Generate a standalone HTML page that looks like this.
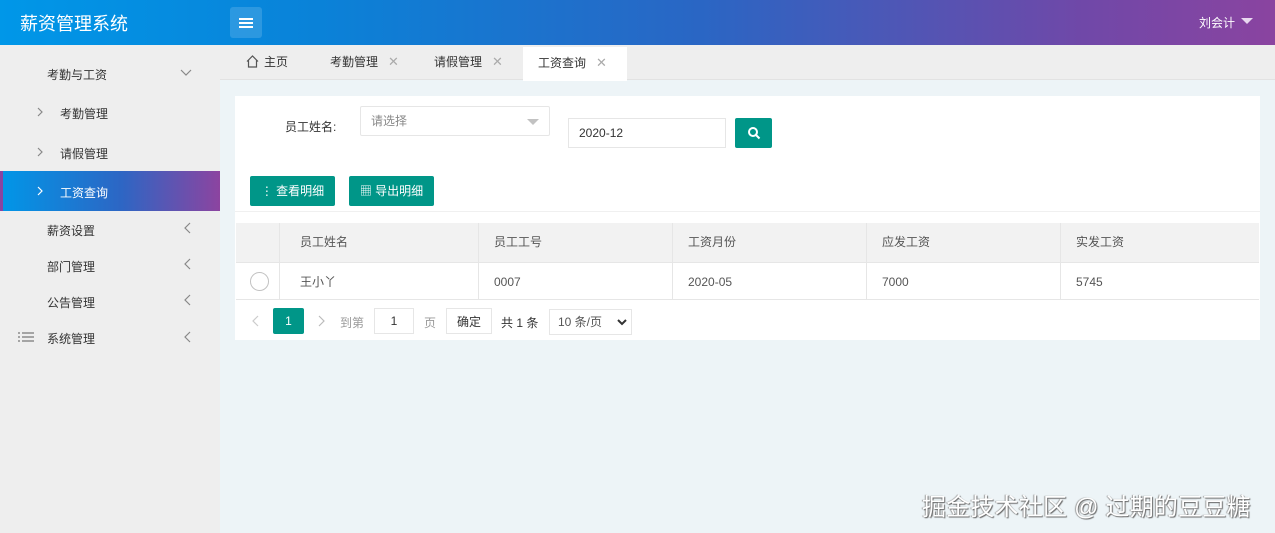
<!DOCTYPE html>
<html><head><meta charset="utf-8"><style>
*{margin:0;padding:0;box-sizing:border-box}
body{width:1275px;height:533px;overflow:hidden;position:relative;background:#edf4f7;font-family:"Liberation Sans","Noto Sans CJK SC",sans-serif;font-size:12px;color:#333}
.a{position:absolute}
.hdr{left:0;top:0;width:1275px;height:45px;background:linear-gradient(90deg,#0097e8 0%,#0a82d8 25%,#2a66c4 55%,#7048a8 85%,#8a44a0 100%)}
.side{left:0;top:45px;width:220px;height:488px;background:#eeeeee}
.tabs{left:220px;top:45px;width:1055px;height:35px;background:#eeeeee;border-bottom:1px solid #e2e2e2}
.tab{top:45px;height:35px;line-height:34px;font-size:12px;color:#333}
.x{color:#aaa;font-size:13px;margin-left:10px}
.card{left:235px;top:96px;width:1025px;height:244px;background:#fff}
.btn{background:#009688;color:#fff;border-radius:2px;height:30px;line-height:30px;font-size:12px;text-align:center}
.th{top:223px;height:39px;background:#f2f2f2;border-right:1px solid #e6e6e6;line-height:38px;padding-left:20px;color:#555}
.td{top:262px;height:38px;border-right:1px solid #e6e6e6;line-height:38px;padding-left:20px;color:#555;border-top:1px solid #e6e6e6;border-bottom:1px solid #e6e6e6}
.mi{color:#333;font-size:12px}
svg.c{position:absolute;fill:none;stroke:#888;stroke-width:1.2}
</style></head><body>
<div class="a hdr"></div>
<div class="a" style="left:20px;top:10px;color:#fff;font-size:18px">薪资管理系统</div>
<div class="a" style="left:230px;top:7px;width:32px;height:31px;background:rgba(255,255,255,.15);border-radius:3px"></div>
<div class="a" style="left:239px;top:18px;width:14px;height:1.5px;background:#fff;box-shadow:0 4px 0 #fff,0 8px 0 #fff"></div>
<div class="a" style="left:1199px;top:14px;color:#fff;font-size:12px">刘会计</div>
<div class="a" style="left:1241px;top:18px;width:0;height:0;border-left:6px solid transparent;border-right:6px solid transparent;border-top:6px solid #e8d8f0"></div>

<div class="a side"></div>
<div class="a mi" style="left:47px;top:66px">考勤与工资</div>
<svg class="c" style="left:180px;top:69px" width="12" height="8"><path d="M1 1l5 5 5-5"/></svg>
<svg class="c" style="left:37px;top:107px" width="6" height="10"><path d="M1 1l4 4-4 4"/></svg>
<div class="a mi" style="left:60px;top:105px">考勤管理</div>
<svg class="c" style="left:37px;top:147px" width="6" height="10"><path d="M1 1l4 4-4 4"/></svg>
<div class="a mi" style="left:60px;top:145px">请假管理</div>
<div class="a" style="left:0;top:171px;width:220px;height:40px;background:linear-gradient(90deg,#0097e8,#2d66c4 55%,#8c44a0)"></div>
<div class="a" style="left:0;top:171px;width:3px;height:40px;background:#8a44a0"></div>
<svg class="c" style="left:37px;top:186px;stroke:#fff" width="6" height="10"><path d="M1 1l4 4-4 4"/></svg>
<div class="a" style="left:60px;top:184px;color:#fff">工资查询</div>
<div class="a mi" style="left:47px;top:222px">薪资设置</div>
<svg class="c" style="left:184px;top:222px" width="7" height="12"><path d="M6 1L1 6l5 5"/></svg>
<div class="a mi" style="left:47px;top:258px">部门管理</div>
<svg class="c" style="left:184px;top:258px" width="7" height="12"><path d="M6 1L1 6l5 5"/></svg>
<div class="a mi" style="left:47px;top:294px">公告管理</div>
<svg class="c" style="left:184px;top:294px" width="7" height="12"><path d="M6 1L1 6l5 5"/></svg>
<svg class="c" style="left:18px;top:332px;stroke:#777" width="16" height="10"><path d="M0 1h2M4 1h12M0 5h2M4 5h12M0 9h2M4 9h12"/></svg>
<div class="a mi" style="left:47px;top:330px">系统管理</div>
<svg class="c" style="left:184px;top:331px" width="7" height="12"><path d="M6 1L1 6l5 5"/></svg>

<div class="a tabs"></div>
<div class="a" style="left:523px;top:47px;width:104px;height:34px;background:#fff"></div>
<svg class="c" style="left:246px;top:55px;stroke:#555" width="13" height="13"><path d="M1 6.5L6.5 1 12 6.5M2.5 5v7h8V5"/></svg>
<div class="a tab" style="left:264px">主页</div>
<div class="a tab" style="left:330px">考勤管理<span class="x">✕</span></div>
<div class="a tab" style="left:434px">请假管理<span class="x">✕</span></div>
<div class="a tab" style="left:538px;top:46px">工资查询<span class="x">✕</span></div>

<div class="a card"></div>
<div class="a" style="left:285px;top:118px;font-size:12px">员工姓名:</div>
<div class="a" style="left:360px;top:106px;width:190px;height:30px;border:1px solid #e6e6e6;border-radius:2px;line-height:28px;padding-left:10px;color:#888">请选择</div>
<div class="a" style="left:527px;top:119px;border-left:6px solid transparent;border-right:6px solid transparent;border-top:6px solid #c2c2c2"></div>
<div class="a" style="left:568px;top:118px;width:158px;height:30px;border:1px solid #e6e6e6;line-height:28px;padding-left:10px;color:#333">2020-12</div>
<div class="a btn" style="left:735px;top:118px;width:37px;height:30px">
<svg width="14" height="14" viewBox="0 0 14 14" style="margin-top:8px"><circle cx="6" cy="6" r="4" stroke="#fff" stroke-width="2" fill="none"/><path d="M9 9l3.5 3.5" stroke="#fff" stroke-width="2"/></svg></div>
<div class="a btn" style="left:250px;top:176px;width:85px">⋮ 查看明细</div>
<div class="a btn" style="left:349px;top:176px;width:85px">▦ 导出明细</div>
<div class="a" style="left:235px;top:211px;width:1025px;height:1px;background:#f0f0f0"></div>

<div class="a th" style="left:236px;width:44px"></div>
<div class="a th" style="left:280px;width:199px">员工姓名</div>
<div class="a th" style="left:479px;width:194px;padding-left:15px">员工工号</div>
<div class="a th" style="left:673px;width:194px;padding-left:15px">工资月份</div>
<div class="a th" style="left:867px;width:194px;padding-left:15px">应发工资</div>
<div class="a th" style="left:1061px;width:198px;border-right:none;padding-left:15px">实发工资</div>
<div class="a td" style="left:236px;width:44px;padding:0"></div>
<div class="a" style="left:250px;top:272px;width:19px;height:19px;border:1px solid #c2c2c2;border-radius:50%"></div>
<div class="a td" style="left:280px;width:199px">王小丫</div>
<div class="a td" style="left:479px;width:194px;padding-left:15px">0007</div>
<div class="a td" style="left:673px;width:194px;padding-left:15px">2020-05</div>
<div class="a td" style="left:867px;width:194px;padding-left:15px">7000</div>
<div class="a td" style="left:1061px;width:198px;border-right:none;padding-left:15px">5745</div>

<svg class="c" style="left:252px;top:315px;stroke:#ccc" width="7" height="12"><path d="M6 1L1 6l5 5"/></svg>
<div class="a" style="left:273px;top:308px;width:31px;height:26px;background:#009688;color:#fff;text-align:center;line-height:26px;border-radius:2px">1</div>
<svg class="c" style="left:318px;top:315px;stroke:#bbb" width="7" height="12"><path d="M1 1l5 5-5 5"/></svg>
<div class="a" style="left:340px;top:314px;color:#999">到第</div>
<div class="a" style="left:374px;top:308px;width:40px;height:26px;border:1px solid #e6e6e6;text-align:center;line-height:24px">1</div>
<div class="a" style="left:424px;top:314px;color:#999">页</div>
<div class="a" style="left:446px;top:308px;width:46px;height:26px;border:1px solid #e6e6e6;text-align:center;line-height:26px">确定</div>
<div class="a" style="left:501px;top:314px">共 1 条</div>
<div class="a" style="left:549px;top:309px;width:83px;height:26px;border:1px solid #e6e6e6;line-height:24px;padding-left:8px;color:#555">10 条/页</div>
<svg class="c" style="left:617px;top:319px;stroke:#333;stroke-width:2" width="10" height="7"><path d="M1 1l4 4 4-4"/></svg>

<div class="a" style="left:922px;top:487px;color:#fff;font-size:24px;letter-spacing:0.2px;text-shadow:1px 1px 1px #666,-1px 0 1px #999">掘金技术社区 @ 过期的豆豆糖</div>
</body></html>
